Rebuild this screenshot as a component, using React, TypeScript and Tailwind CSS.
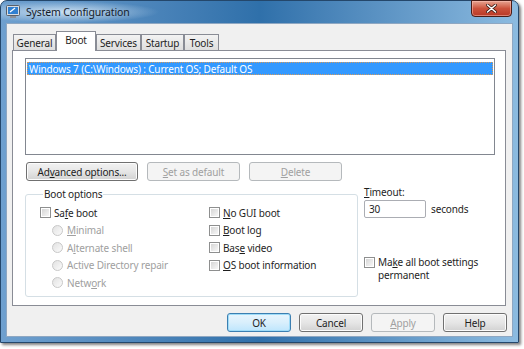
import React from 'react';

const font = { fontFamily: '"Noto Sans", "Liberation Sans", sans-serif' };

// underline the access key at position k
function Key({ text, k }: { text: string; k: number }) {
  if (k < 0) return <>{text}</>;
  return (
    <>
      {text.slice(0, k)}
      <span className="underline underline-offset-[1px]">{text[k]}</span>
      {text.slice(k + 1)}
    </>
  );
}

function Check({ text, k }: { text: string; k: number }) {
  return (
    <div className="flex items-center h-[17.5px] gap-[3px]">
      <div className="w-[11px] h-[11px] border border-[#8e8f8f] p-px bg-white">
        <div className="w-full h-full bg-gradient-to-br from-[#d6d6d6] to-[#f7f7f7]" />
      </div>
      <span className="leading-none">
        <Key text={text} k={k} />
      </span>
    </div>
  );
}

function Radio({ text, k }: { text: string; k: number }) {
  return (
    <div className="flex items-center h-[17.5px] gap-[4px] text-[#a0a0a0]">
      <div className="w-[11px] h-[11px] rounded-full border border-[#c8c8c8] bg-gradient-to-br from-[#e2e2e2] to-[#fbfbfb]" />
      <span className="leading-none">
        <Key text={text} k={k} />
      </span>
    </div>
  );
}

function Btn({
  text,
  k,
  w,
  disabled,
  focus,
}: {
  text: string;
  k: number;
  w: string;
  disabled?: boolean;
  focus?: boolean;
}) {
  const base = 'h-[19px] rounded-[3px] border flex items-center justify-center leading-none ' + w;
  if (disabled)
    return (
      <div className={base + ' border-[#b5b9bc] bg-[#f4f4f4] text-[#a0a0a0]'}>
        <Key text={text} k={k} />
      </div>
    );
  if (focus)
    return (
      <div
        className={
          base +
          ' border-[#3c7fb1] bg-gradient-to-b from-[#e8f5fd] via-[#d9effc] to-[#bee6fd] shadow-[inset_0_0_0_1px_#9fdcf8]'
        }
      >
        <Key text={text} k={k} />
      </div>
    );
  return (
    <div
      className={
        base +
        ' border-[#707070] bg-gradient-to-b from-[#f2f2f2] via-[#e6e6e6] to-[#d2d2d2] shadow-[inset_0_0_0_1px_#fcfcfc]'
      }
    >
      <Key text={text} k={k} />
    </div>
  );
}

export default function App() {
  const tabs = [
    { label: 'General', w: 'w-[43px]' },
    { label: 'Boot', w: 'w-[40px]', active: true },
    { label: 'Services', w: 'w-[45px]' },
    { label: 'Startup', w: 'w-[43px]' },
    { label: 'Tools', w: 'w-[35px]' },
  ];

  return (
    <div
      className="w-[524px] h-[349px] bg-white overflow-hidden text-[10px] tracking-[-0.15px] text-[#1e1e1e]"
      style={font}
    >
      <div className="w-[519px] h-[343px] flex flex-col rounded-t-[7px] border border-[#24476b] bg-gradient-to-r from-[#6fa0cf] via-[#2f70aa] to-[#8cbbe0] shadow-[2px_2px_3px_rgba(0,0,0,0.5)]">
        {/* title bar */}
        <div className="h-[22px] flex items-start relative">
          <div className="flex items-center h-[22px] pl-[5px] gap-[5px] bg-[radial-gradient(ellipse_at_40%_50%,rgba(215,232,246,0.9),rgba(215,232,246,0)_70%)] pr-[30px]">
            <svg width="15" height="14" viewBox="0 0 15 14">
              <rect x="0.5" y="0.5" width="13" height="10" rx="1" fill="#d8dde3" stroke="#59606a" />
              <rect x="2" y="2" width="10" height="7" fill="#2f7fd0" />
              <path d="M4 7 L9 3" stroke="#fff" strokeWidth="1.2" />
              <rect x="4" y="11" width="6" height="2" fill="#8a9099" />
            </svg>
            <span className="text-[10.5px] text-[#15202b] leading-none">System Configuration</span>
          </div>
          <div className="ml-auto mr-[6px] -mt-px w-[41px] h-[17px] rounded-b-[4px] border border-[#4a1c16] bg-gradient-to-b from-[#e6a391] via-[#cc523c] to-[#b83826] shadow-[inset_0_0_0_1px_rgba(255,200,190,0.5)] flex items-center justify-center">
            <svg width="11" height="9" viewBox="0 0 11 9">
              <path d="M1.5 1 L9.5 8 M9.5 1 L1.5 8" stroke="#3a1a14" strokeWidth="3" strokeLinecap="round" />
              <path d="M1.5 1 L9.5 8 M9.5 1 L1.5 8" stroke="#fff" strokeWidth="1.6" strokeLinecap="round" />
            </svg>
          </div>
        </div>

        {/* client area */}
        <div className="mx-[5px] mb-[5px] flex-1 border border-[#8ea7c2] bg-[#f0f0f0] flex flex-col">
          {/* tabs */}
          <div className="flex items-end pl-[6px] pt-[7px] -mb-px relative z-10">
            {tabs.map((t) =>
              t.active ? (
                <div
                  key={t.label}
                  className={
                    t.w +
                    ' h-[20px] bg-white border border-b-0 border-[#898c95] flex items-start justify-center pt-[3px] leading-none'
                  }
                >
                  {t.label}
                </div>
              ) : (
                <div
                  key={t.label}
                  className={
                    t.w +
                    ' h-[17px] border border-[#898c95] bg-gradient-to-b from-[#f3f3f3] to-[#dedede] flex items-center justify-center leading-none'
                  }
                >
                  {t.label}
                </div>
              )
            )}
          </div>

          {/* tab panel */}
          <div className="ml-[5px] w-[494px] h-[256px] bg-white border border-[#898c95] flex flex-col">
            <div className="mt-[7px] ml-[12px] w-[470px] h-[97px] border border-[#828790] pt-[3px] px-px">
              <div className="h-[13px] bg-[#3399ff] border border-dotted border-[#d49a5c] text-white flex items-center pl-[1px] leading-none">
                Windows 7 (C:\Windows) : Current OS; Default OS
              </div>
            </div>

            <div className="flex mt-[7px] ml-[13px] gap-[9px]">
              <Btn text="Advanced options..." k={2} w="w-[112px]" />
              <Btn text="Set as default" k={0} w="w-[93px]" disabled />
              <Btn text="Delete" k={0} w="w-[93px]" disabled />
            </div>

            <div className="flex mt-[7px]">
              <fieldset className="ml-[12px] w-[333px] h-[110px] border border-[#d5dfe5] rounded-[3px] pl-[14px] -mt-[1px]">
                <legend className="ml-[3px] px-[1px] leading-[14px]">Boot options</legend>
                <div className="flex pt-[3px]">
                  <div className="w-[169px] flex flex-col">
                    <Check text="Safe boot" k={2} />
                    <div className="pl-[12px] flex flex-col">
                      <Radio text="Minimal" k={0} />
                      <Radio text="Alternate shell" k={1} />
                      <Radio text="Active Directory repair" k={-1} />
                      <Radio text="Network" k={4} />
                    </div>
                  </div>
                  <div className="flex flex-col">
                    <Check text="No GUI boot" k={0} />
                    <Check text="Boot log" k={0} />
                    <Check text="Base video" k={3} />
                    <Check text="OS boot information" k={0} />
                  </div>
                </div>
              </fieldset>

              <div className="ml-[6px] flex flex-col -mt-[2px]">
                <span className="leading-[12px]">
                  <Key text="Timeout:" k={0} />
                </span>
                <div className="flex items-center mt-[2px] gap-[5px]">
                  <div className="w-[62px] h-[18px] border border-[#abadb3] rounded-[2px] bg-white flex items-center pl-[4px] leading-none">
                    30
                  </div>
                  <span className="leading-none">seconds</span>
                </div>
                <div className="flex items-start mt-[38px] gap-[3px]">
                  <div className="w-[11px] h-[11px] mt-[1px] border border-[#8e8f8f] p-px bg-white shrink-0">
                    <div className="w-full h-full bg-gradient-to-br from-[#d6d6d6] to-[#f7f7f7]" />
                  </div>
                  <div className="flex flex-col leading-[13px]">
                    <span>
                      <Key text="Make all boot settings" k={2} />
                    </span>
                    <span>permanent</span>
                  </div>
                </div>
              </div>
            </div>
          </div>

          {/* dialog buttons */}
          <div className="flex justify-end gap-[8px] pr-[5px] mt-[7px]">
            <Btn text="OK" k={-1} w="w-[64px]" focus />
            <Btn text="Cancel" k={-1} w="w-[64px]" />
            <Btn text="Apply" k={0} w="w-[64px]" disabled />
            <Btn text="Help" k={-1} w="w-[64px]" />
          </div>
        </div>
      </div>
    </div>
  );
}
